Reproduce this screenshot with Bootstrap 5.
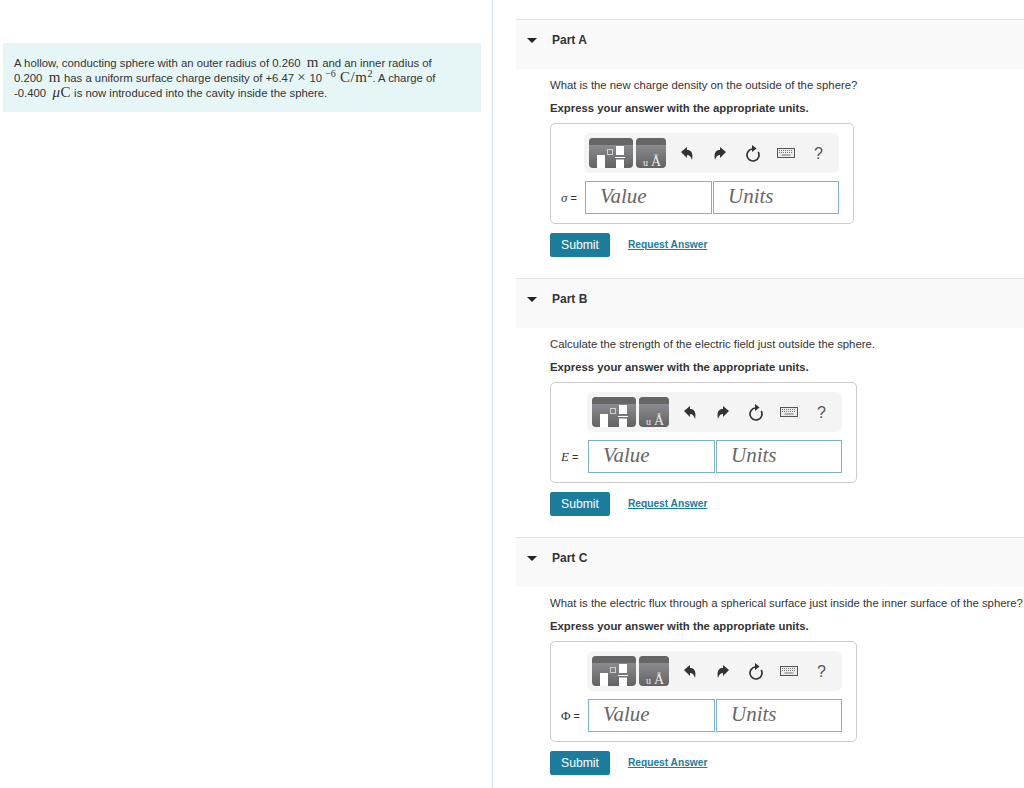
<!DOCTYPE html>
<html lang="en">
<head>
    <meta charset="UTF-8">
    <meta name="viewport" content="width=device-width, initial-scale=1.0">
    <title>Part A, B, C</title>
    <link href="https://cdn.jsdelivr.net/npm/bootstrap@5.3.0/dist/css/bootstrap.min.css" rel="stylesheet">
    <style>
        html, body { height: 788px; overflow: hidden; }
        body { font-family: "Liberation Sans", Arial, sans-serif; font-size: 11.34px; line-height: 15px; color: #333; background: #fff; }
        .mth { font-family: "Liberation Serif", serif; font-size: 15px; line-height: 0; letter-spacing: .5px; }
        .mth sup { font-size: 10px; line-height: 0; top: -5px; letter-spacing: 0; }
        .mth-sm { font-family: "Liberation Serif", serif; font-size: 13px; }

        .pane-left { width: 493px; height: 788px; flex: none; border-right: 1px solid #d4dff0; padding: 43px 11px 0 3px; }
        .stmt { background: #e6f6f7; padding: 13px 11px 0; height: 69px; white-space: nowrap; }
        .pane-right { padding: 19px 0 0 23px; flex: 1 1 auto; min-width: 0; overflow: hidden; }

        .part { height: 259px; white-space: nowrap; }
        .part-head { height: 50px; background: #f9f9f9; border-top: 1px solid #e3e3e3; padding: 0 0 8px 11px; font-size: 12px; font-weight: 700; }
        .caret-down { width: 0; height: 0; border-left: 5px solid transparent; border-right: 5px solid transparent; border-top: 5px solid #222; margin-right: 15px; }
        .part-body { padding: 9px 0 0 34px; }
        .ask { margin: 0 0 8px; }
        .ask-bold { margin: 0 0 7px; font-weight: 700; }

        .answer-box { border: 1px solid #ccc; border-radius: 5px; padding: 9px 14px 9px 10px; width: max-content; }
        .tool-bar { background: #f4f4f4; border-radius: 6px; height: 40px; width: 255px; padding-left: 5px; margin-bottom: 8px; }
        .tool-gap { width: 3px; }
        .tool-slot { width: 33px; }
        .tool-help { font-size: 16px; color: #555; }
        .eq-label { font-size: 11px; white-space: pre; }
        .eq-short { width: 24px; }
        .eq-long { width: 27px; }
        .val-input { width: 127px; height: 33px; border: 1px solid #7db3c6; font-family: "Liberation Serif", serif; font-style: italic; font-size: 21px; color: #666; padding-left: 14px; line-height: 29px; }
        .val-input + .val-input { margin-left: 1px; width: 126px; }

        .btn-send { background: #1c7c9c; border: 1px solid #1c7c9c; color: #fff; font-size: 12.2px; line-height: 15px; padding: 3px 10px; border-radius: 2px; height: 24px; }
        .ask-link { color: #1c7c9c; font-size: 10.2px; font-weight: 700; text-decoration: underline; margin: -2px 0 0 18px; }
        .foot { margin-top: 9px; }
    </style>
</head>
<body>
    <svg width="0" height="0" class="position-absolute">
        <defs>
            <linearGradient id="btnGrad" x1="0" y1="0" x2="0" y2="1">
                <stop offset="0" stop-color="#98989d"/>
                <stop offset="1" stop-color="#626264"/>
            </linearGradient>
            <symbol id="tplBtn" viewBox="0 0 44 30">
                <rect width="44" height="30" rx="4" fill="url(#btnGrad)"/>
                <path d="M0 7V4a4 4 0 0 1 4-4h36a4 4 0 0 1 4 4v3z" fill="#666"/>
                <rect x="8" y="17" width="8" height="13" fill="#fff"/>
                <rect x="18.500" y="11.500" width="5" height="5" fill="none" stroke="#d0d0d0"/>
                <rect x="27" y="8" width="8" height="9" fill="#fff"/>
                <rect x="26" y="19" width="10" height="1" fill="#fff"/>
                <rect x="27" y="21.500" width="8" height="8.500" fill="#fff"/>
            </symbol>
            <symbol id="icoUndo" viewBox="0 0 12 13">
                <path d="M0 5 6 0v3c4 0 6.500 3 5 10-1-3.500-2.500-5-5-5v3z" fill="#333"/>
            </symbol>
            <symbol id="icoRedo" viewBox="0 0 12 13">
                <path d="M12 5 6 0v3C2 3-.5 6 1 13c1-3.500 2.500-5 5-5v3z" fill="#333"/>
            </symbol>
            <symbol id="icoReset" viewBox="0 0 16 18">
                <path d="M13.200 8A6 6 0 1 1 7.500 5" fill="none" stroke="#333" stroke-width="1.700"/>
                <path d="M7 1 11.500 4.500 7 8z" fill="#333"/>
            </symbol>
            <symbol id="icoKeys" viewBox="0 0 18 10">
                <rect x="0.500" y="0.500" width="17" height="9" fill="#ececec" stroke="#555"/>
                <path d="M2 2.500h14M2 4.500h14" stroke="#777" stroke-dasharray="1 1"/>
                <path d="M4.500 7h9" stroke="#777"/>
            </symbol>
        </defs>
    </svg>

    <div class="d-flex">
        <div class="pane-left">
            <div class="stmt">
                A hollow, conducting sphere with an outer radius of 0.260 &nbsp;<span class="mth">m</span> and an inner radius of<br>
                0.200 &nbsp;<span class="mth">m</span> has a uniform surface charge density of +6.47 <span class="mth">&times;</span> 10 <span class="mth"><sup>&minus;6</sup> C/m<sup>2</sup></span>. A charge of<br>
                -0.400 &nbsp;<span class="mth"><i>&mu;</i>C</span> is now introduced into the cavity inside the sphere.
            </div>
        </div>

        <div class="pane-right">
            <!-- Part A -->
            <div class="part">
                <div class="part-head d-flex align-items-center"><span class="caret-down"></span>Part A</div>
                <div class="part-body">
                    <p class="ask">What is the new charge density on the outside of the sphere?</p>
                    <p class="ask-bold">Express your answer with the appropriate units.</p>
                    <div class="answer-box">
                        <div class="d-flex justify-content-end">
                            <div class="tool-bar d-flex align-items-center">
                                <svg width="44" height="30"><use href="#tplBtn"/></svg>
                                <span class="tool-gap"></span>
                                <svg width="30" height="30"><rect width="30" height="30" rx="4" fill="url(#btnGrad)"/><path d="M0 7V4a4 4 0 0 1 4-4h22a4 4 0 0 1 4 4v3z" fill="#666"/><text x="7" y="28" font-family="Liberation Serif" font-size="10" fill="#eee">u</text><text x="15" y="28" font-family="Liberation Serif" font-size="14" fill="#eee">&Aring;</text></svg>
                                <span class="tool-slot d-flex justify-content-center ms-1"><svg width="12" height="13"><use href="#icoUndo"/></svg></span>
                                <span class="tool-slot d-flex justify-content-center"><svg width="12" height="13"><use href="#icoRedo"/></svg></span>
                                <span class="tool-slot d-flex justify-content-center"><svg width="16" height="18"><use href="#icoReset"/></svg></span>
                                <span class="tool-slot d-flex justify-content-center"><svg width="18" height="10"><use href="#icoKeys"/></svg></span>
                                <span class="tool-slot text-center tool-help">?</span>
                            </div>
                        </div>
                        <div class="d-flex align-items-center">
                            <span class="eq-label eq-short"><span class="mth-sm fst-italic">&sigma;</span> =</span>
                            <div class="val-input">Value</div>
                            <div class="val-input">Units</div>
                        </div>
                    </div>
                    <div class="foot d-flex align-items-center">
                        <button class="btn btn-send" type="button">Submit</button>
                        <a class="ask-link" href="#">Request Answer</a>
                    </div>
                </div>
            </div>

            <!-- Part B -->
            <div class="part">
                <div class="part-head d-flex align-items-center"><span class="caret-down"></span>Part B</div>
                <div class="part-body">
                    <p class="ask">Calculate the strength of the electric field just outside the sphere.</p>
                    <p class="ask-bold">Express your answer with the appropriate units.</p>
                    <div class="answer-box">
                        <div class="d-flex justify-content-end">
                            <div class="tool-bar d-flex align-items-center">
                                <svg width="44" height="30"><use href="#tplBtn"/></svg>
                                <span class="tool-gap"></span>
                                <svg width="30" height="30"><rect width="30" height="30" rx="4" fill="url(#btnGrad)"/><path d="M0 7V4a4 4 0 0 1 4-4h22a4 4 0 0 1 4 4v3z" fill="#666"/><text x="7" y="28" font-family="Liberation Serif" font-size="10" fill="#eee">u</text><text x="15" y="28" font-family="Liberation Serif" font-size="14" fill="#eee">&Aring;</text></svg>
                                <span class="tool-slot d-flex justify-content-center ms-1"><svg width="12" height="13"><use href="#icoUndo"/></svg></span>
                                <span class="tool-slot d-flex justify-content-center"><svg width="12" height="13"><use href="#icoRedo"/></svg></span>
                                <span class="tool-slot d-flex justify-content-center"><svg width="16" height="18"><use href="#icoReset"/></svg></span>
                                <span class="tool-slot d-flex justify-content-center"><svg width="18" height="10"><use href="#icoKeys"/></svg></span>
                                <span class="tool-slot text-center tool-help">?</span>
                            </div>
                        </div>
                        <div class="d-flex align-items-center">
                            <span class="eq-label eq-long"><span class="mth-sm fst-italic">E</span> =</span>
                            <div class="val-input">Value</div>
                            <div class="val-input">Units</div>
                        </div>
                    </div>
                    <div class="foot d-flex align-items-center">
                        <button class="btn btn-send" type="button">Submit</button>
                        <a class="ask-link" href="#">Request Answer</a>
                    </div>
                </div>
            </div>

            <!-- Part C -->
            <div class="part">
                <div class="part-head d-flex align-items-center"><span class="caret-down"></span>Part C</div>
                <div class="part-body">
                    <p class="ask">What is the electric flux through a spherical surface just inside the inner surface of the sphere?</p>
                    <p class="ask-bold">Express your answer with the appropriate units.</p>
                    <div class="answer-box">
                        <div class="d-flex justify-content-end">
                            <div class="tool-bar d-flex align-items-center">
                                <svg width="44" height="30"><use href="#tplBtn"/></svg>
                                <span class="tool-gap"></span>
                                <svg width="30" height="30"><rect width="30" height="30" rx="4" fill="url(#btnGrad)"/><path d="M0 7V4a4 4 0 0 1 4-4h22a4 4 0 0 1 4 4v3z" fill="#666"/><text x="7" y="28" font-family="Liberation Serif" font-size="10" fill="#eee">u</text><text x="15" y="28" font-family="Liberation Serif" font-size="14" fill="#eee">&Aring;</text></svg>
                                <span class="tool-slot d-flex justify-content-center ms-1"><svg width="12" height="13"><use href="#icoUndo"/></svg></span>
                                <span class="tool-slot d-flex justify-content-center"><svg width="12" height="13"><use href="#icoRedo"/></svg></span>
                                <span class="tool-slot d-flex justify-content-center"><svg width="16" height="18"><use href="#icoReset"/></svg></span>
                                <span class="tool-slot d-flex justify-content-center"><svg width="18" height="10"><use href="#icoKeys"/></svg></span>
                                <span class="tool-slot text-center tool-help">?</span>
                            </div>
                        </div>
                        <div class="d-flex align-items-center">
                            <span class="eq-label eq-long"><span class="mth-sm">&Phi;</span> =</span>
                            <div class="val-input">Value</div>
                            <div class="val-input">Units</div>
                        </div>
                    </div>
                    <div class="foot d-flex align-items-center">
                        <button class="btn btn-send" type="button">Submit</button>
                        <a class="ask-link" href="#">Request Answer</a>
                    </div>
                </div>
            </div>
        </div>
    </div>

    <script src="https://cdn.jsdelivr.net/npm/bootstrap@5.3.0/dist/js/bootstrap.bundle.min.js"></script>
</body>
</html>
